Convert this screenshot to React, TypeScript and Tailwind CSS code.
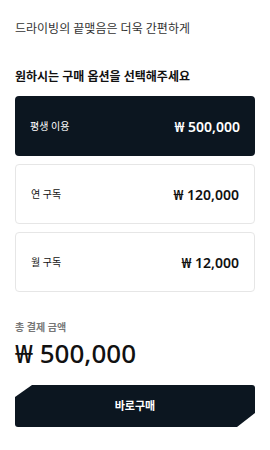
import { useState } from "react";

interface Option {
  id: string;
  label: string;
  price: string;
}

const options: Option[] = [
  { id: "lifetime", label: "평생 이용", price: "₩ 500,000" },
  { id: "year", label: "연 구독", price: "₩ 120,000" },
  { id: "month", label: "월 구독", price: "₩ 12,000" },
];

const font = { fontFamily: '"Noto Sans", "Noto Sans CJK KR", sans-serif' };

function App() {
  const [selected] = useState("lifetime");

  return (
    <div className="w-[270px] h-[450px] bg-white px-[15px]" style={font}>
      {/* 상단 문구 */}
      <p className="pt-[20px] text-[12px] leading-[18px] text-[#333]">
        드라이빙의 끝맺음은 더욱 간편하게
      </p>

      <h2 className="mt-[30px] text-[12px] leading-[18px] font-bold text-[#111]">
        원하시는 구매 옵션을 선택해주세요
      </h2>

      {/* 옵션 리스트 */}
      <ul className="mt-[10px] flex flex-col gap-[8px]">
        {options.map((item) => {
          const active = item.id === selected;
          return (
            <li
              key={item.id}
              className={
                active
                  ? "h-[60px] flex items-center justify-between px-[15px] rounded-[4px] bg-[#0c1620] text-white"
                  : "h-[60px] flex items-center justify-between px-[15px] rounded-[4px] bg-white border border-[#e6e6e6] text-[#111]"
              }
            >
              <span className="text-[10px]">{item.label}</span>
              <span className="text-[14px] font-semibold">{item.price}</span>
            </li>
          );
        })}
      </ul>

      {/* 총 결제 금액 */}
      <p className="mt-[28px] text-[10px] leading-[14px] font-semibold text-[#777]">총 결제 금액</p>
      <p className="mt-[3px] text-[26px] leading-[32px] font-medium text-[#111]">₩ 500,000</p>

      <button
        className="mt-[16px] w-full h-[42px] bg-[#0c1620] text-white text-[11px] font-semibold rounded-[3px] [clip-path:polygon(17px_0,100%_0,100%_28px,calc(100%-18px)_100%,0_100%,0_12px)]"
      >
        바로구매
      </button>
    </div>
  );
}

export default App;
